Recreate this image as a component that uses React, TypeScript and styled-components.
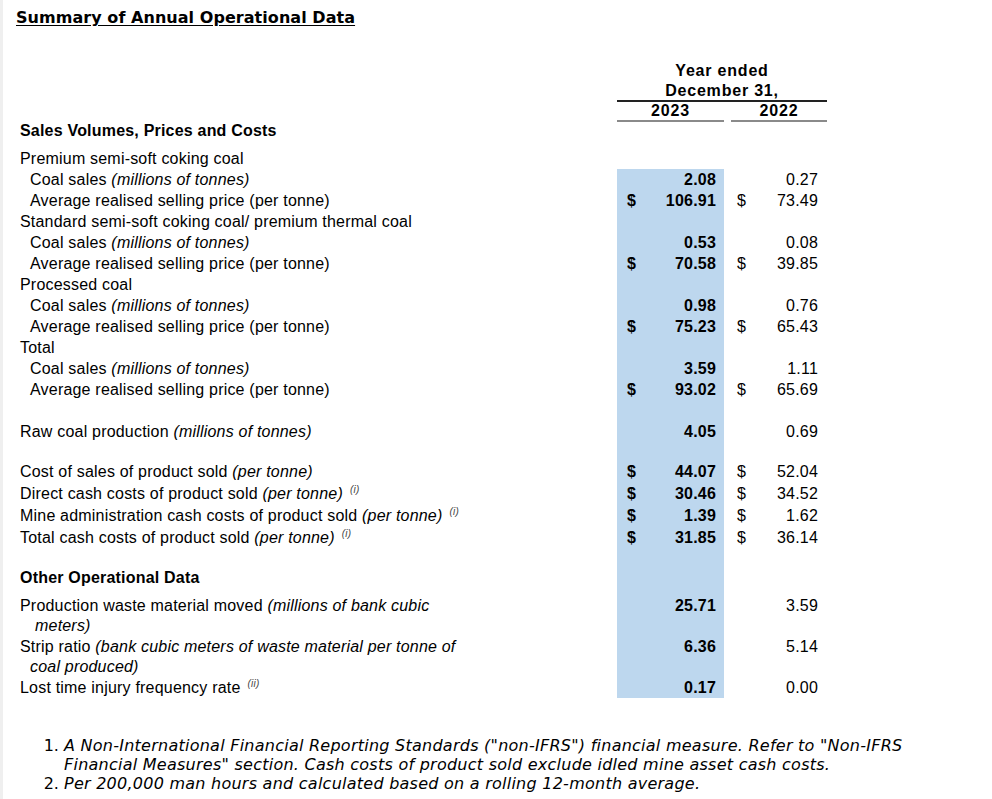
import React from "react";
import styled, { createGlobalStyle } from "styled-components";

const GlobalStyle = createGlobalStyle`
  html, body { margin: 0; padding: 0; background: #ffffff; }
  body { font-family: "Liberation Sans", Arial, sans-serif; color: #000; }
`;

const Page = styled.div`
  min-height: 799px;
  box-sizing: border-box;
  border-left: 3px solid #efefef;
  padding: 8px 0 0 13px;
`;

const Title = styled.h1`
  margin: 0;
  font-family: "DejaVu Sans", Verdana, sans-serif;
  font-size: 16px;
  font-weight: bold;
  line-height: 19px;
  letter-spacing: 0.05px;
  text-decoration: underline;
  text-underline-offset: 2px;
  color: #000;
`;

const Table = styled.table`
  margin-top: 34px;
  border-collapse: collapse;
  table-layout: fixed;
  width: 811px;
  font-family: "Liberation Sans", Arial, sans-serif;
  font-size: 16px;
  letter-spacing: 0.2px;
  td { padding: 0; }
`;

const Row = styled.tr<{ $h: number }>`
  height: ${(p) => p.$h}px;
`;

const Label = styled.td<{ $indent?: number; $bold?: boolean }>`
  padding-left: ${(p) => 4 + (p.$indent ?? 0)}px !important;
  font-weight: ${(p) => (p.$bold ? "bold" : "normal")};
  line-height: 20px;
  vertical-align: middle;
  white-space: nowrap;
`;

const Cont = styled.span<{ $indent: number }>`
  display: block;
  padding-left: ${(p) => p.$indent}px;
`;

const Em = styled.i`
  font-style: italic;
`;

const Note = styled.sup`
  font-size: 10px;
  font-style: italic;
  color: #444;
  margin-left: 7px;
  vertical-align: 6px;
  line-height: 0;
`;

const HeadCell = styled.td<{ $rule?: string }>`
  text-align: center;
  font-weight: bold;
  letter-spacing: 0.8px;
  line-height: 18px;
  vertical-align: middle;
  border-bottom: ${(p) => (p.$rule ? `2px solid ${p.$rule}` : "none")};
`;

const ValCell = styled.td<{ $blue?: boolean; $bold?: boolean; $padL: number; $padR: number; $top?: boolean }>`
  background: ${(p) => (p.$blue ? "#bdd7ee" : "transparent")};
  font-weight: ${(p) => (p.$bold ? "bold" : "normal")};
  padding-left: ${(p) => p.$padL}px !important;
  padding-right: ${(p) => p.$padR}px !important;
  padding-top: ${(p) => (p.$top ? "1px" : "0")} !important;
  vertical-align: ${(p) => (p.$top ? "top" : "middle")};
  line-height: 20px;
`;

const ValBox = styled.div`
  display: flex;
  justify-content: space-between;
  align-items: center;
`;

const Gap = styled.td``;

const Notes = styled.ol`
  margin: 38px 0 0 0;
  padding-left: 48px;
  font-family: "DejaVu Sans", Verdana, sans-serif;
  font-size: 16px;
  line-height: 19px;
  letter-spacing: 0.25px;
  width: 880px;
  li::marker { letter-spacing: 0; }
`;

const NoteText = styled.span`
  font-style: italic;
`;

type V = { d?: boolean; v?: string };

function Values({ a, b, blue = true, top }: { a?: V; b?: V; blue?: boolean; top?: boolean }) {
  return (
    <>
      <ValCell $blue={blue} $bold $padL={10} $padR={8} $top={top}>
        <ValBox>
          <span>{a?.d ? "$" : ""}</span>
          <span>{a?.v ?? ""}</span>
        </ValBox>
      </ValCell>
      <Gap />
      <ValCell $padL={6} $padR={9} $top={top}>
        <ValBox>
          <span>{b?.d ? "$" : ""}</span>
          <span>{b?.v ?? ""}</span>
        </ValBox>
      </ValCell>
    </>
  );
}

function Blank({ h }: { h: number }) {
  return (
    <Row $h={h}>
      <Label />
      <Values />
    </Row>
  );
}

type Item = { label: React.ReactNode; a: string; b: string };

function Group({
  title,
  sales,
  price,
  first,
}: {
  title: string;
  sales: [string, string];
  price: [string, string];
  first?: boolean;
}) {
  return (
    <>
      <Row $h={21}>
        <Label>{title}</Label>
        <Values blue={!first} />
      </Row>
      <Row $h={21}>
        <Label $indent={10}>
          Coal sales <Em>(millions of tonnes)</Em>
        </Label>
        <Values a={{ v: sales[0] }} b={{ v: sales[1] }} />
      </Row>
      <Row $h={21}>
        <Label $indent={10}>Average realised selling price (per tonne)</Label>
        <Values a={{ d: true, v: price[0] }} b={{ d: true, v: price[1] }} />
      </Row>
    </>
  );
}

const groups: { title: string; sales: [string, string]; price: [string, string] }[] = [
  { title: "Premium semi-soft coking coal", sales: ["2.08", "0.27"], price: ["106.91", "73.49"] },
  { title: "Standard semi-soft coking coal/ premium thermal coal", sales: ["0.53", "0.08"], price: ["70.58", "39.85"] },
  { title: "Processed coal", sales: ["0.98", "0.76"], price: ["75.23", "65.43"] },
  { title: "Total", sales: ["3.59", "1.11"], price: ["93.02", "65.69"] },
];

const costs: Item[] = [
  { label: <>Cost of sales of product sold <Em>(per tonne)</Em></>, a: "44.07", b: "52.04" },
  { label: <>Direct cash costs of product sold <Em>(per tonne)</Em><Note>(i)</Note></>, a: "30.46", b: "34.52" },
  { label: <>Mine administration cash costs of product sold <Em>(per tonne)</Em><Note>(i)</Note></>, a: "1.39", b: "1.62" },
  { label: <>Total cash costs of product sold <Em>(per tonne)</Em><Note>(i)</Note></>, a: "31.85", b: "36.14" },
];

export default function App() {
  return (
    <>
      <GlobalStyle />
      <Page>
        <Title>Summary of Annual Operational Data</Title>
        <Table>
          <colgroup>
            <col style={{ width: 601 }} />
            <col style={{ width: 107 }} />
            <col style={{ width: 7 }} />
            <col style={{ width: 96 }} />
          </colgroup>
          <tbody>
            <Row $h={20}>
              <Label />
              <HeadCell colSpan={3}>Year ended</HeadCell>
            </Row>
            <Row $h={20}>
              <Label />
              <HeadCell colSpan={3} $rule="#222">December 31,</HeadCell>
            </Row>
            <Row $h={18}>
              <Label />
              <HeadCell $rule="#8a8a8a">2023</HeadCell>
              <Gap />
              <HeadCell $rule="#8a8a8a">2022</HeadCell>
            </Row>
            <Row $h={20}>
              <Label $bold>Sales Volumes, Prices and Costs</Label>
              <Gap colSpan={3} />
            </Row>
            <Row $h={7}>
              <Gap colSpan={4} />
            </Row>
            {groups.map((g, i) => (
              <Group key={g.title} {...g} first={i === 0} />
            ))}
            <Blank h={21} />
            <Row $h={21}>
              <Label>
                Raw coal production <Em>(millions of tonnes)</Em>
              </Label>
              <Values a={{ v: "4.05" }} b={{ v: "0.69" }} />
            </Row>
            <Blank h={19} />
            {costs.map((c, i) => (
              <Row $h={22} key={i}>
                <Label>{c.label}</Label>
                <Values a={{ d: true, v: c.a }} b={{ d: true, v: c.b }} />
              </Row>
            ))}
            <Blank h={18} />
            <Row $h={22}>
              <Label $bold>Other Operational Data</Label>
              <Values />
            </Row>
            <Blank h={6} />
            <Row $h={41}>
              <Label>
                Production waste material moved <Em>(millions of bank cubic</Em>
                <Cont $indent={15}>
                  <Em>meters)</Em>
                </Cont>
              </Label>
              <Values a={{ v: "25.71" }} b={{ v: "3.59" }} top />
            </Row>
            <Row $h={41}>
              <Label>
                Strip ratio <Em>(bank cubic meters of waste material per tonne of</Em>
                <Cont $indent={10}>
                  <Em>coal produced)</Em>
                </Cont>
              </Label>
              <Values a={{ v: "6.36" }} b={{ v: "5.14" }} top />
            </Row>
            <Row $h={21}>
              <Label>
                Lost time injury frequency rate<Note>(ii)</Note>
              </Label>
              <Values a={{ v: "0.17" }} b={{ v: "0.00" }} />
            </Row>
          </tbody>
        </Table>
        <Notes>
          <li>
            <NoteText>
              A Non-International Financial Reporting Standards ("non-IFRS") financial measure. Refer to "Non-IFRS
              Financial Measures" section. Cash costs of product sold exclude idled mine asset cash costs.
            </NoteText>
          </li>
          <li>
            <NoteText>Per 200,000 man hours and calculated based on a rolling 12-month average.</NoteText>
          </li>
        </Notes>
      </Page>
    </>
  );
}
